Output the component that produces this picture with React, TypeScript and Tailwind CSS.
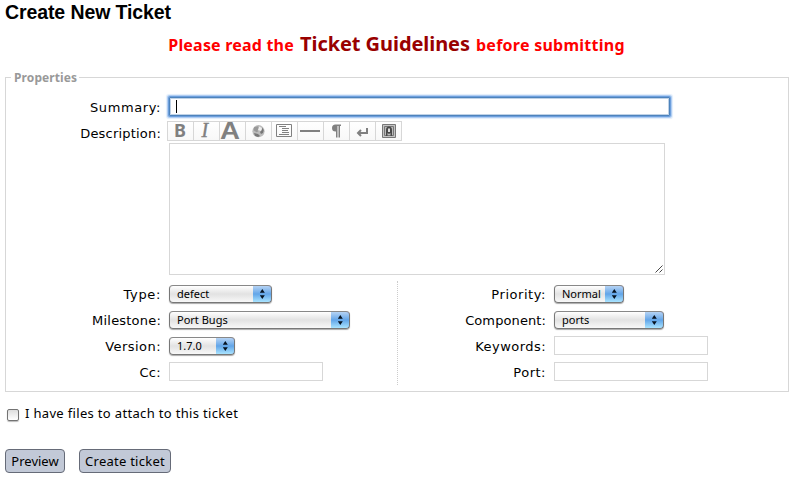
import React from 'react';

const verdana = "font-['DejaVu_Sans',sans-serif] text-[13px] leading-[19px] text-black";
const lucida = "font-['Noto_Sans',sans-serif] text-black";

function Label({ text, className = '' }: { text: string; className?: string }) {
  return <label className={`shrink-0 whitespace-nowrap text-right ${verdana} ${className}`}>{text}</label>;
}

function Select({ value, className }: { value: string; className: string }) {
  return (
    <div
      className={`flex h-[18px] overflow-hidden rounded-[4px] border border-[#777] border-t-[#888] bg-linear-to-b from-white via-[#e2e2e2] to-[#f8f8f8] shadow-[0_1px_1px_#aaa] ${className}`}
    >
      <span className={`flex-1 whitespace-nowrap pl-[7px] text-[11px] leading-[15px] ${lucida}`}>{value}</span>
      <span className="-my-px -mr-px h-[18px] w-[19px] shrink-0 rounded-r-[4px] border-y border-r border-t-[#34449c] border-r-[#2353a5] border-b-[#55799a] bg-linear-to-b from-[#b5d3f4] via-[#62a5e8] to-[#a9e4ff]">
        <svg width="18" height="16" viewBox="0 0 18 16" fill="#071320">
          <path d="M6.8 6.8 9.3 3l2.5 3.8zM6.8 9.3h5L9.3 13z" />
        </svg>
      </span>
    </div>
  );
}

function TextField() {
  return <div className="-mt-px h-[19px] w-[154px] border border-[#d7d7d7] bg-white" />;
}

const gray = '#808080';
const icons: React.ReactNode[] = [
  <text x="6" y="15" fontFamily="Noto Sans" fontWeight="700" fontSize="18" fill={gray}>B</text>,
  <text x="7.5" y="15" fontFamily="Liberation Serif" fontStyle="italic" fontSize="20" fill={gray} stroke={gray} strokeWidth=".4">I</text>,
  <text x="0" y="16.5" fontFamily="Liberation Sans" fontWeight="700" fontSize="23" textLength="20" lengthAdjust="spacingAndGlyphs" fill={gray}>A</text>,
  <g>
    <circle cx="12.5" cy="9.2" r="6.1" fill="#bcbcbc" />
    <path d="M8 5.2l4-1 1.5 2-2 2 1 1-2 1-3-2z" fill="#999" />
    <path d="M13 4.5l3 1.5-1 3-3-1z" fill="#eee" />
    <path d="M16 5.5l1.8 2.5-.8 3-2 1-1-2 2-2zM8 11l4 1 2 2-2 1-3-1z" fill="#777" />
  </g>,
  <path d="M4.5 2.5h15v12h-15zM7 4.5h7M10 6.5h7M10 8.5h6M10 10.5h7M7 12.5h10" fill="none" stroke={gray} />,
  <path d="M2 9h20" stroke={gray} strokeWidth="2" />,
  <path d="M17 2.5h-5.5a3.5 3.5 0 0 0 0 7h.5v6h1.5V4h1v11.5H16V4h1z" fill={gray} />,
  <path d="M17 6v5H8M11 8l-3 3 3 3" fill="none" stroke={gray} strokeWidth="2" />,
  <g>
    <path d="M6.5 2.5h13v13h-13z" fill="#c4c4c4" stroke="#777" />
    <path d="M8.5 4.5h9v9h-9z" fill="#bbb" stroke="#777" />
    <path d="M10 14V8q0-3.5 3-3.5T16 8v6h-1.5v-3l-1.5 1-1.5-1v3z" fill="#484848" />
    <path d="M12 6.5h2v3.5h-2z" fill="#ddd" />
  </g>,
];

function Toolbar() {
  return (
    <div className="-ml-[2px] flex h-5 w-[235px] border border-[#d7d7d7]">
      {icons.map((icon, i) => (
        <span
          key={i}
          className="h-[18px] w-[26px] shrink-0 border-r border-[#d7d7d7] bg-linear-to-b from-white to-[#f8f8f8] last:w-[25px] last:border-r-0"
        >
          <svg width="25" height="18" viewBox="0 0 25 18" className="block overflow-visible">
            {icon}
          </svg>
        </span>
      ))}
    </div>
  );
}

function Field({ label, labelClass, children }: { label: string; labelClass: string; children: React.ReactNode }) {
  return (
    <div className="flex h-[26px] items-start pt-[4px]">
      <Label text={label} className={labelClass} />
      <div className="ml-[8px]">{children}</div>
    </div>
  );
}

export default function App() {
  return (
    <main className="h-[479px] w-[797px] overflow-hidden bg-white pl-[5px] pt-px">
      <h1 className="h-[22px] whitespace-nowrap font-['Liberation_Sans',Arial,sans-serif] text-[19.5px] leading-[22px] font-bold tracking-[-0.1px] text-black">
        Create New Ticket
      </h1>
      <p className="mt-[7px] flex h-[28px] w-[783px] items-baseline justify-center gap-[6px] whitespace-nowrap font-['Noto_Sans',sans-serif] text-[16px] leading-[28px] font-bold text-[#f00]">
        <span className="tracking-[0.2px]">Please read the</span>
        <a className="text-[20px] tracking-[-0.06px] text-[#900]">Ticket Guidelines</a>
        <span className="tracking-[0.25px]">before submitting</span>
      </p>
      <section className="mt-[10px] w-[784px]">
        <div className="flex h-[19px] items-center">
          <span className="h-px w-[6px] bg-[#d7d7d7]" />
          <span className="pl-[3px] pr-[2px] font-['Noto_Sans',sans-serif] text-[12px] leading-[19px] font-bold tracking-[0.1px] text-[#999]">Properties</span>
          <span className="h-px flex-1 bg-[#d7d7d7]" />
        </div>
        <div className="-mt-[9px] h-[314px] border border-t-0 border-[#d7d7d7]">
          <div className="flex pt-[19px]">
            <Label text="Summary:" className="w-[155px] pt-px tracking-[0.6px]" />
            <div className="ml-[8px] h-[19px] w-[501px] rounded-[1px] border border-[#4d83bc] bg-white pl-[6px] pt-[2px] shadow-[0_0_0_1px_#6d9fdd,0_0_0_2px_#afcdf2,0_0_1px_3px_#e1edfb,inset_0_0_0_1px_#bfd2e7]">
              <div className="h-[13px] w-px bg-black" />
            </div>
          </div>
          <div className="mt-[4px] flex">
            <Label text="Description:" className="w-[155px] pt-[3px] tracking-[0.2px]" />
            <div className="ml-[8px]">
              <Toolbar />
              <div className="mt-[2px] flex h-[132px] w-[496px] items-end justify-end border border-[#d7d7d7]">
                <svg width="10" height="10" viewBox="0 0 10 10" stroke="#333" strokeWidth=".9">
                  <path d="M1.5 8.5 8.5 1.5M5.5 8.5 8.5 5.5" />
                </svg>
              </div>
            </div>
          </div>
          <div className="mt-[6px] flex">
            <div className="h-[104px] w-[392px] border-r border-dotted border-[#ccc]">
              <Field label="Type:" labelClass="w-[155px] tracking-[0.65px]"><Select value="defect" className="w-[103px]" /></Field>
              <Field label="Milestone:" labelClass="w-[155px] tracking-[0.2px]"><Select value="Port Bugs" className="w-[181px]" /></Field>
              <Field label="Version:" labelClass="w-[155px] tracking-[0.45px]"><Select value="1.7.0" className="w-[66px]" /></Field>
              <Field label="Cc:" labelClass="w-[155px] tracking-[0.3px]"><TextField /></Field>
            </div>
            <div className="h-[104px]">
              <Field label="Priority:" labelClass="w-[148px] tracking-[0.55px]"><Select value="Normal" className="w-[70px]" /></Field>
              <Field label="Component:" labelClass="w-[148px] tracking-[0.1px]"><Select value="ports" className="w-[110px]" /></Field>
              <Field label="Keywords:" labelClass="w-[148px] tracking-[0.45px]"><TextField /></Field>
              <Field label="Port:" labelClass="w-[148px] tracking-[0.5px]"><TextField /></Field>
            </div>
          </div>
        </div>
      </section>
      <div className="mt-[11px] flex h-[20px] items-start pl-[2px]">
        <span className="mt-[6px] h-[12px] w-[12px] rounded-[2px] border border-[#737373] bg-linear-to-b from-[#ddd] to-white shadow-[0_1px_1px_#bbb]" />
        <span className={`ml-[6px] whitespace-nowrap text-[13px] leading-[20px] tracking-[0.33px] ${lucida}`}>I have files to attach to this ticket</span>
      </div>
      <div className="mt-[26px] flex gap-[14px]">
        <button className={`h-[24px] w-[60px] rounded-[4px] border border-[#666b78] bg-[#c2c9d7] text-[13px] leading-[22px] ${lucida}`}>Preview</button>
        <button className={`h-[24px] w-[92px] whitespace-nowrap rounded-[4px] border border-[#666b78] bg-[#c2c9d7] text-[13px] leading-[22px] tracking-[0.25px] ${lucida}`}>Create ticket</button>
      </div>
    </main>
  );
}
